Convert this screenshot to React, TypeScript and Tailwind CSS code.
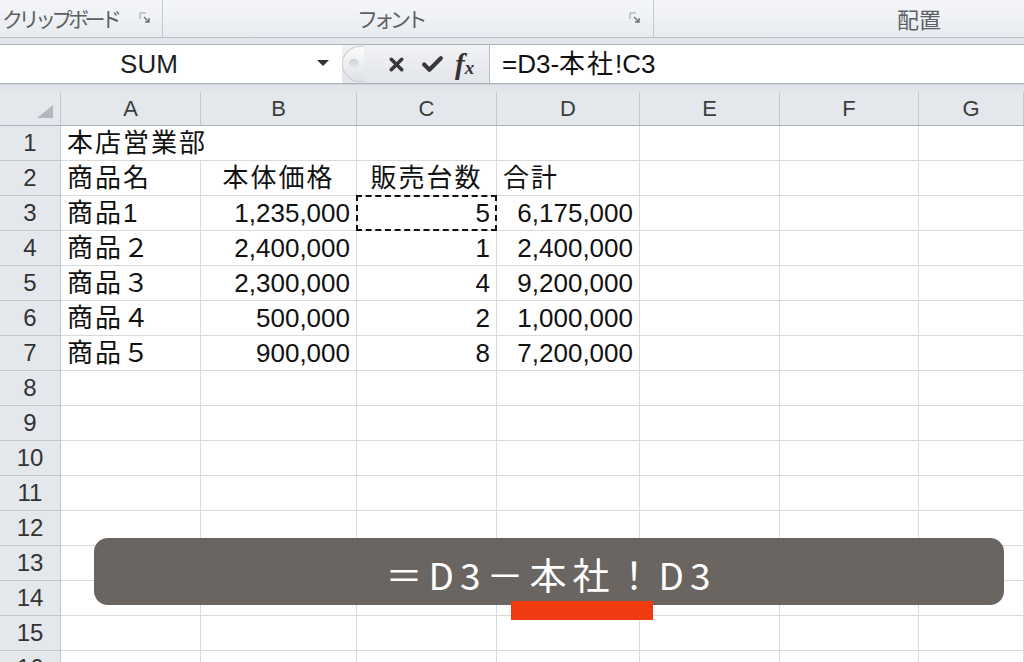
import { X, Check } from "lucide-react";

const latin = { fontFamily: '"Liberation Sans", "Noto Sans CJK JP", sans-serif' };
const jp = { fontFamily: '"Noto Sans CJK JP", "Noto Sans", sans-serif' };

const colW = ["w-[140px]", "w-[156px]", "w-[140px]", "w-[143px]", "w-[140px]", "w-[139px]", "flex-1"];
const letters = ["A", "B", "C", "D", "E", "F", "G"];

type Cell = { t: string; a?: "l" | "r" | "c" };

const data: Cell[][] = [
  [{ t: "本店営業部" }],
  [{ t: "商品名" }, { t: "本体価格", a: "c" }, { t: "販売台数", a: "c" }, { t: "合計" }],
  [{ t: "商品1" }, { t: "1,235,000", a: "r" }, { t: "5", a: "r" }, { t: "6,175,000", a: "r" }],
  [{ t: "商品２" }, { t: "2,400,000", a: "r" }, { t: "1", a: "r" }, { t: "2,400,000", a: "r" }],
  [{ t: "商品３" }, { t: "2,300,000", a: "r" }, { t: "4", a: "r" }, { t: "9,200,000", a: "r" }],
  [{ t: "商品４" }, { t: "500,000", a: "r" }, { t: "2", a: "r" }, { t: "1,000,000", a: "r" }],
  [{ t: "商品５" }, { t: "900,000", a: "r" }, { t: "8", a: "r" }, { t: "7,200,000", a: "r" }],
];

const hasJp = (s: string) => /[^\x00-\x7f]/.test(s);

const Launcher = () => (
  <svg width="13" height="13" viewBox="0 0 13 13" className="shrink-0">
    <path d="M1 1h6M1 1v6" stroke="#9aa0a8" strokeWidth="1" fill="none" />
    <path d="M5 5l5 5M10 6v4H6" stroke="#6b717a" strokeWidth="1.4" fill="none" />
  </svg>
);

const Ribbon = () => (
  <div className="flex h-[38px] border-b border-[#b9bfc7] bg-gradient-to-b from-[#f5f6f8] to-[#e8ebef] text-[#5b5f66]" style={jp}>
    <div className="flex w-[163px] items-center justify-between border-r border-[#c5cad1] pl-[2px] pr-[10px]">
      <span className="text-[21px] tracking-[-4.5px]">クリップボード</span>
      <Launcher />
    </div>
    <div className="flex w-[491px] items-center border-r border-[#c5cad1] pl-[194px] pr-[11px]">
      <span className="flex-1 text-[21px] tracking-[-4.5px]">フォント</span>
      <Launcher />
    </div>
    <div className="flex flex-1 items-center pl-[243px]">
      <span className="text-[22px]">配置</span>
    </div>
  </div>
);

const FormulaBar = () => (
  <div className="bg-[#e3e7ec] pt-[6px]">
    <div className="flex h-[40px] border-y border-[#aab1ba] bg-white">
      <div className="relative flex w-[342px] items-center justify-center bg-white">
        <span className="text-[26px] text-[#1e1e1e] -ml-[44px]" style={latin}>SUM</span>
        <span className="absolute right-[13px] top-[15px] h-0 w-0 border-x-[6px] border-t-[6px] border-x-transparent border-t-[#333]" />
      </div>
      <div className="flex w-[148px] items-center border-r border-[#b9bfc7] bg-gradient-to-b from-[#f1f2f4] to-[#e2e5e9]">
        <div className="flex h-[36px] w-[22px] items-center justify-center rounded-l-full border border-r-0 border-[#c9cdd3] bg-gradient-to-b from-[#fbfbfc] to-[#dfe2e6]">
          <span className="h-[10px] w-[10px] rounded-full bg-gradient-to-b from-[#c9cdd2] to-[#eef0f2]" />
        </div>
        <X className="ml-[22px]" size={21} strokeWidth={4} color="#383838" />
        <Check className="ml-[13px]" size={25} strokeWidth={4} color="#383838" />
        <span className="ml-[10px] text-[29px] leading-none font-bold italic text-[#333]" style={{ fontFamily: '"Liberation Serif", serif' }}>
          f<span className="text-[19px]">x</span>
        </span>
      </div>
      <div className="flex flex-1 items-center pl-[12px] text-[26px] text-[#111]" style={latin}>
        =D3-<span className="tracking-[2px]">本社</span>!C3
      </div>
    </div>
    <div className="h-[8px] border-t border-[#cfd4da] bg-[#e1e5ea]" />
  </div>
);

const Sheet = () => (
  <div className="flex flex-col bg-white">
    <div className="flex h-[34px] border-b border-[#a9b1ba] bg-[#e4e8ed]">
      <div className="relative w-[61px] shrink-0 border-r border-[#c3c8cf]">
        <svg className="absolute right-[7px] bottom-[7px]" width="16" height="13" viewBox="0 0 16 13">
          <path d="M16 0V13H0Z" fill="#b3b8be" />
        </svg>
      </div>
      {letters.map((l, i) => (
        <div
          key={l}
          className={`${colW[i]} flex shrink-0 items-center justify-center border-r border-[#c3c8cf] text-[22px] text-[#3d3d3d]`}
          style={latin}
        >
          {l}
        </div>
      ))}
    </div>
    {Array.from({ length: 16 }, (_, r) => (
      <div key={r} className="flex h-[35px] shrink-0">
        <div
          className="flex w-[61px] shrink-0 items-center justify-center border-r border-b border-[#c3c8cf] bg-[#e4e8ed] text-[24px] text-[#333]"
          style={latin}
        >
          {r + 1}
        </div>
        {letters.map((_, c) => {
          const cell = data[r]?.[c];
          const overflow = r === 0 && c === 0;
          const align =
            cell?.a === "r" ? "justify-end pr-[6px]" : cell?.a === "c" ? "justify-center" : "justify-start pl-[6px]";
          return (
            <div
              key={c}
              className={`${colW[c]} relative flex shrink-0 items-center border-b border-[#dadada] ${
                overflow ? "" : "border-r"
              } ${align} text-[26px] leading-none text-[#111] whitespace-nowrap`}
              style={latin}
            >
              {cell && (
                <span className={`${overflow ? "relative z-10" : ""} ${hasJp(cell.t) ? "tracking-[2px]" : ""}`}>
                  {cell.t}
                </span>
              )}
              {r === 2 && c === 2 && (
                <span className="pointer-events-none absolute -inset-[1px] border-2 border-dashed border-[#111]" />
              )}
            </div>
          );
        })}
      </div>
    ))}
  </div>
);

export default function App() {
  return (
    <div className="relative h-[662px] w-[1024px] overflow-hidden bg-white">
      <Ribbon />
      <FormulaBar />
      <Sheet />
      <div
        className="absolute left-[94px] top-[538px] flex h-[67px] w-[910px] items-center justify-center rounded-[14px] bg-[#625d58]/95 pt-[6px] pl-[4px] text-[37px] tracking-[6px] text-white"
        style={jp}
      >
        ＝D3－本社！D3
      </div>
      <div className="absolute left-[511px] top-[601px] h-[19px] w-[142px] bg-[#f03a10]" />
    </div>
  );
}
